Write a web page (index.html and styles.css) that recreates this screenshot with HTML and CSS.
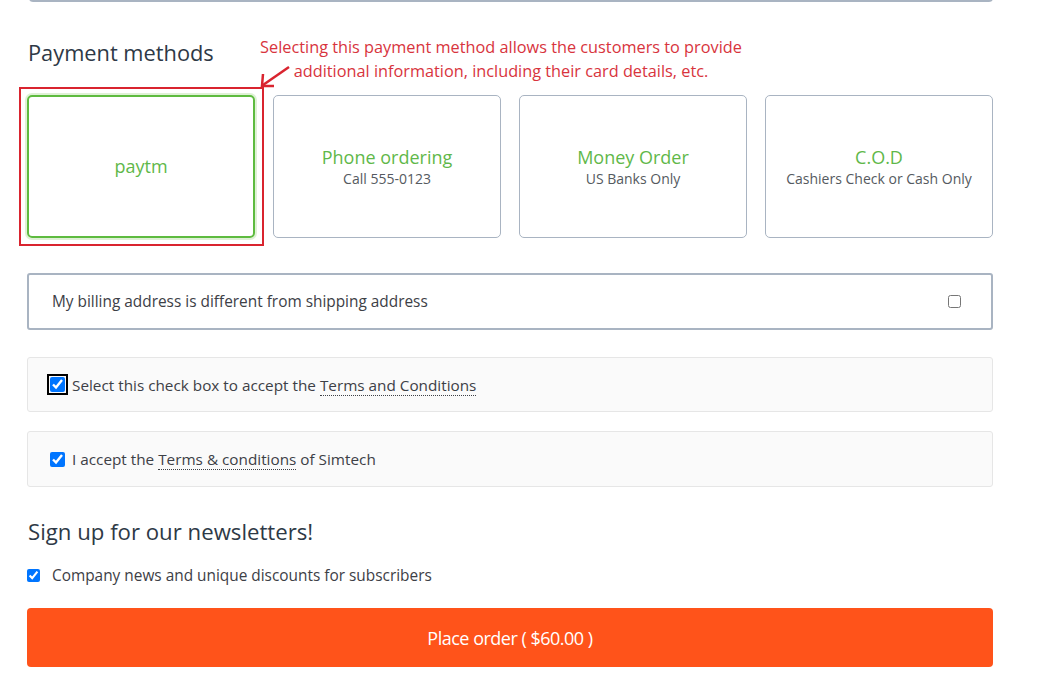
FILE: index.html
```html
<!DOCTYPE html>
<html lang="en">
<head>
    <meta charset="UTF-8">
    <title>Checkout - Payment</title>
    <link rel="stylesheet" href="styles.css">
</head>
<body>
    <div class="page">
        <div class="prev-box"></div>

        <h2 class="section-title">Payment methods</h2>
        <p class="note">Selecting this payment method allows the customers to provide<br>additional information, including their card details, etc.</p>
        <svg class="note-arrow" width="40" height="30" viewBox="0 0 40 30">
            <line x1="30" y1="2" x2="4" y2="20" stroke="#d9242f" stroke-width="2.5"/>
            <polyline points="4,9 3,21 15,21" fill="none" stroke="#d9242f" stroke-width="2.5"/>
        </svg>

        <div class="methods">
            <div class="method active">
                <div class="method-title">paytm</div>
            </div>
            <div class="method">
                <div class="method-title">Phone ordering</div>
                <div class="method-desc">Call 555-0123</div>
            </div>
            <div class="method">
                <div class="method-title">Money Order</div>
                <div class="method-desc">US Banks Only</div>
            </div>
            <div class="method">
                <div class="method-title">C.O.D</div>
                <div class="method-desc">Cashiers Check or Cash Only</div>
            </div>
        </div>

        <label class="billing">
            <span>My billing address is different from shipping address</span>
            <input type="checkbox">
        </label>

        <div class="terms">
            <input type="checkbox" class="focused" checked>
            <span>Select this check box to accept the <a href="#" class="terms-link">Terms and Conditions</a></span>
        </div>

        <div class="terms second">
            <input type="checkbox" checked>
            <span>I accept the <a href="#" class="terms-link">Terms &amp; conditions</a> of Simtech</span>
        </div>

        <h2 class="section-title news-title">Sign up for our newsletters!</h2>
        <label class="news-row">
            <input type="checkbox" checked>
            <span>Company news and unique discounts for subscribers</span>
        </label>

        <button class="place-order">Place order ( $60.00 )</button>
    </div>
</body>
</html>
```

FILE: styles.css
```css
body {
    margin: 0;
    background: #fff;
    font-family: "Open Sans", "Noto Sans", sans-serif;
    color: #404348;
}

.page {
    position: relative;
    width: 966px;
    padding: 0 0 30px 27px;
}

/* bottom edge of the block above */
.prev-box {
    height: 6px;
    margin: -6px 0 0 2px;
    border: 2px solid #a9b4c2;
    border-top: none;
    border-radius: 0 0 4px 4px;
}

.section-title {
    margin: 36px 0 0 1px;
    font-size: 21.8px;
    line-height: 30px;
    font-weight: 400;
    color: #2e3946;
}

.note {
    position: absolute;
    top: 41px;
    left: 238px;
    width: 526px;
    margin: 0;
    text-align: center;
    font-size: 16.3px;
    line-height: 24px;
    color: #d8343d;
}

.note-arrow {
    position: absolute;
    top: 71px;
    left: 259px;
}

.methods {
    display: grid;
    grid-template-columns: repeat(4, 1fr);
    gap: 18px;
    margin-top: 27px;
}

.method {
    position: relative;
    box-sizing: border-box;
    height: 143px;
    border: 1px solid #a9b4c2;
    border-radius: 5px;
    display: flex;
    flex-direction: column;
    justify-content: center;
    align-items: center;
    text-align: center;
    padding-top: 2px;
}

.method.active {
    border: 2px solid #5ebb3f;
    box-shadow: 0 0 0 2px #dff1d6;
    padding-top: 0;
}

/* red annotation frame */
.method.active::after {
    content: "";
    position: absolute;
    top: -10px;
    left: -10px;
    right: -11px;
    bottom: -10px;
    border: 2px solid #d9242f;
}

.method-title {
    font-size: 18px;
    line-height: 21px;
    color: #5fb84a;
}

.method-desc {
    font-size: 14px;
    line-height: 21px;
    color: #555a60;
}

.billing {
    display: flex;
    align-items: center;
    justify-content: space-between;
    height: 53px;
    margin-top: 35px;
    padding: 0 30px 0 23px;
    border: 2px solid #a9b4c2;
    border-radius: 3px;
    font-size: 15.4px;
    color: #3d4046;
}

.billing input {
    margin: 0;
}

.terms {
    display: flex;
    align-items: center;
    height: 53px;
    margin-top: 27px;
    padding: 0 18px;
    background: #fafafa;
    border: 1px solid #e6e6e6;
    border-radius: 3px;
    font-size: 15.3px;
    color: #3d4046;
}

.terms.second {
    height: 54px;
    margin-top: 19px;
}

.terms input {
    width: 15px;
    height: 15px;
    margin: 0 7px 0 4px;
}

.terms input.focused {
    outline: 2px solid #000;
    outline-offset: 1px;
    border-radius: 2px;
}

.terms-link {
    color: #3d4046;
    text-decoration: none;
    border-bottom: 1px dotted #3d4046;
}

.news-title {
    margin-top: 30px;
    font-size: 22.2px;
}

.news-row {
    display: flex;
    align-items: center;
    gap: 12px;
    margin-top: 18px;
    height: 20px;
    font-size: 15.4px;
    color: #3d4046;
}

.news-row input {
    margin: 0;
}

.place-order {
    display: block;
    width: 100%;
    height: 59px;
    margin-top: 23px;
    border: none;
    border-radius: 4px;
    background: #ff531a;
    color: #fff;
    font-family: "Open Sans", sans-serif;
    font-size: 18px;
    letter-spacing: -0.5px;
    cursor: pointer;
}
```
